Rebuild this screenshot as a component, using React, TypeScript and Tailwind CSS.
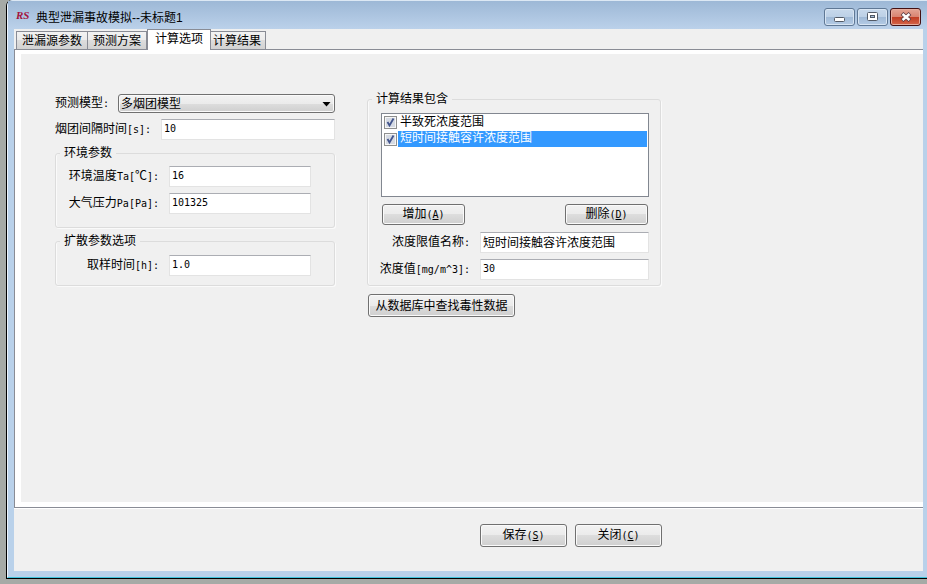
import { useState, type ReactNode } from 'react'

const tabs = ['泄漏源参数', '预测方案', '计算选项', '计算结果']

const inputClass =
  'h-[21px] min-w-0 border border-[#e3e3e3] border-t-[#abadb3] bg-white px-0.5 pb-0.5 leading-4 outline-none'

const monoClass = "font-['DejaVu_Sans_Mono',monospace] text-[10px]"

const buttonClass =
  'rounded-[3px] border border-[#707070] bg-[linear-gradient(#f2f2f2,#ebebeb_50%,#dddddd_50%,#cfcfcf)] text-center leading-4 shadow-[inset_0_0_0_1px_#fafafa]'

const captionButtonClass =
  'flex h-[18px] w-[31px] items-center justify-center rounded-[3px] border'

/* Half-width text, 6px per character */
function Half({ children }: { children: ReactNode }) {
  return <span className={`whitespace-pre ${monoClass}`}>{children}</span>
}

function PushButton({ label, accessKey, className }: { label: string; accessKey: string; className: string }) {
  return (
    <button type="button" accessKey={accessKey} className={`${buttonClass} ${className}`}>
      {label}
      <Half>
        (<u>{accessKey}</u>)
      </Half>
    </button>
  )
}

function GroupBox({ title, className, children }: { title: string; className: string; children: ReactNode }) {
  return (
    <fieldset className="w-full min-w-0 rounded-[3px] border border-[#dcdcdc] shadow-[1px_1px_0_#fafafa,inset_1px_0_0_#fafafa]">
      <legend className="ml-1 px-1 leading-[14px]">{title}</legend>
      <div className={className}>{children}</div>
    </fieldset>
  )
}

function TitleBar() {
  return (
    <header className="flex h-7 shrink-0 items-start bg-linear-to-b from-[#9db8d6] to-[#bbd1ea] pl-2 pr-1.5">
      <span className="mt-2 w-5 font-['Liberation_Serif',serif] text-[11px] font-bold italic leading-3 text-[#a3123c]">
        RS
      </span>
      <h1 className="mt-2 flex-1 truncate leading-[18px]">典型泄漏事故模拟--未标题1</h1>
      <div className="mt-[7px] flex gap-0.5">
        <button
          type="button"
          aria-label="最小化"
          className={`${captionButtonClass} border-[#5f7895] bg-[linear-gradient(#c8d9ec,#bcd0e6_50%,#9fb9d6_50%,#b4cbe5)] shadow-[inset_0_0_0_1px_#d8e5f3]`}
        >
          <svg width="13" height="7" viewBox="0 0 13 7" className="mt-1">
            <rect x="1.5" y="1.5" width="10" height="4" rx="1" fill="#fff" stroke="#525a66" />
          </svg>
        </button>
        <button
          type="button"
          aria-label="最大化"
          className={`${captionButtonClass} border-[#5f7895] bg-[linear-gradient(#c8d9ec,#bcd0e6_50%,#9fb9d6_50%,#b4cbe5)] shadow-[inset_0_0_0_1px_#d8e5f3]`}
        >
          <svg width="11" height="10" viewBox="0 0 11 10">
            <rect x="0.5" y="0.5" width="10" height="8" rx="1" fill="#fff" stroke="#525a66" />
            <rect x="3.5" y="3.5" width="4" height="2" fill="#a9c0dc" stroke="#525a66" />
          </svg>
        </button>
        <button
          type="button"
          aria-label="关闭窗口"
          className={`${captionButtonClass} border-[#431012] bg-[linear-gradient(#e3a595,#d98370_50%,#c03c22_50%,#d5664a)] shadow-[inset_0_0_0_1px_#e6ac9c]`}
        >
          <svg width="12" height="10" viewBox="0 0 12 10">
            <path d="M2 1.5 L10 8.5 M10 1.5 L2 8.5" stroke="#5a3a40" strokeWidth="4" />
            <path d="M2.5 2 L9.5 8 M9.5 2 L2.5 8" stroke="#fff" strokeWidth="2.4" />
          </svg>
        </button>
      </div>
    </header>
  )
}

function ModelSettings() {
  return (
    <div className="flex w-[280px] shrink-0 flex-col gap-1.5 pt-0.5">
      <div className="flex items-center">
        <label htmlFor="model" className="w-[63px] whitespace-nowrap leading-4">
          预测模型<Half>:</Half>
        </label>
        <div className="relative flex-1">
          <select
            id="model"
            className={`${buttonClass} block h-[19px] w-full appearance-none pl-0.5 text-left text-[12px]`}
          >
            <option>多烟团模型</option>
          </select>
          <svg width="9" height="5" viewBox="0 0 9 5" className="pointer-events-none absolute right-1 top-2">
            <path d="M0.5 0 H8.5 L4.5 4.5 Z" fill="#000" />
          </svg>
        </div>
      </div>
      <div className="flex items-center">
        <label htmlFor="interval" className="w-[106px] whitespace-nowrap leading-4">
          烟团间隔时间<Half>[s]:</Half>
        </label>
        <input id="interval" defaultValue="10" className={`${inputClass} ${monoClass} flex-1`} />
      </div>

      <GroupBox title="环境参数" className="flex flex-col gap-1.5 pb-[13px] pr-[23px] pt-1.5">
        <div className="flex items-center justify-end gap-2.5">
          <label htmlFor="temperature" className="whitespace-nowrap leading-4">
            环境温度<Half>Ta[</Half>℃<Half>]:</Half>
          </label>
          <input id="temperature" defaultValue="16" className={`${inputClass} ${monoClass} w-[142px]`} />
        </div>
        <div className="flex items-center justify-end gap-2.5">
          <label htmlFor="pressure" className="whitespace-nowrap leading-4">
            大气压力<Half>Pa[Pa]:</Half>
          </label>
          <input id="pressure" defaultValue="101325" className={`${inputClass} ${monoClass} w-[142px]`} />
        </div>
      </GroupBox>

      <GroupBox title="扩散参数选项" className="pb-[9px] pr-[23px] pt-[7px]">
        <div className="flex items-center justify-end gap-2.5">
          <label htmlFor="sampling" className="whitespace-nowrap leading-4">
            取样时间<Half>[h]:</Half>
          </label>
          <input id="sampling" defaultValue="1.0" className={`${inputClass} ${monoClass} w-[142px]`} />
        </div>
      </GroupBox>
    </div>
  )
}

function ResultSettings() {
  const [items, setItems] = useState([
    { name: '半致死浓度范围', checked: true },
    { name: '短时间接触容许浓度范围', checked: true },
  ])
  const [selected, setSelected] = useState(1)

  const toggle = (index: number) => {
    setItems(items.map((item, i) => (i === index ? { ...item, checked: !item.checked } : item)))
  }

  return (
    <div className="flex w-[294px] shrink-0 flex-col items-start gap-2">
      <GroupBox title="计算结果包含" className="pb-[5px] pl-[13px] pr-[11px] pt-[7px]">
        <ul className="h-[84px] border border-[#828790] bg-white px-px">
          {items.map((item, i) => (
            <li key={item.name} className="flex h-4 items-center first:h-[17px]" onClick={() => setSelected(i)}>
              <span className="relative mx-px size-[13px] shrink-0">
                <input
                  id={`range-${i}`}
                  type="checkbox"
                  checked={item.checked}
                  onChange={() => toggle(i)}
                  className="block size-[13px] appearance-none border border-[#8e8f8f] bg-[#d5dae3] shadow-[inset_0_0_0_1px_#f6f6f6]"
                />
                {item.checked && (
                  <svg width="13" height="13" viewBox="0 0 13 13" className="pointer-events-none absolute inset-0">
                    <path d="M3.5 6 L5.5 9.5 L9.5 2.5" fill="none" stroke="#42548c" strokeWidth="1.8" />
                  </svg>
                )}
              </span>
              <label
                htmlFor={`range-${i}`}
                className={
                  i === selected
                    ? 'h-4 flex-1 bg-[#3399ff] pl-0.5 leading-[14px] text-white'
                    : 'h-4 flex-1 pl-0.5 leading-[14px]'
                }
              >
                {item.name}
              </label>
            </li>
          ))}
        </ul>
        <div className="mt-[7px] flex justify-between px-px">
          <PushButton label="增加" accessKey="A" className="h-[21px] w-[83px]" />
          <PushButton label="删除" accessKey="D" className="h-[21px] w-[83px]" />
        </div>
        <div className="mt-[7px] flex flex-col gap-1.5">
          <div className="flex items-center justify-end gap-2.5">
            <label htmlFor="limit-name" className="whitespace-nowrap leading-4">
              浓度限值名称<Half>:</Half>
            </label>
            <input
              id="limit-name"
              defaultValue="短时间接触容许浓度范围"
              className={`${inputClass} w-[169px] shrink-0 text-[12px]`}
            />
          </div>
          <div className="flex items-center justify-end gap-2.5">
            <label htmlFor="limit-value" className="whitespace-nowrap leading-4">
              浓度值<Half>[mg/m^3]:</Half>
            </label>
            <input id="limit-value" defaultValue="30" className={`${inputClass} ${monoClass} w-[169px] shrink-0`} />
          </div>
        </div>
      </GroupBox>
      <button type="button" className={`${buttonClass} ml-px h-[23px] w-[147px]`}>
        从数据库中查找毒性数据
      </button>
    </div>
  )
}

export default function App() {
  const [activeTab, setActiveTab] = useState(2)

  return (
    <div className="flex min-h-screen flex-col bg-[#a6aaa6] pb-[5px] pl-1.5 font-['Liberation_Sans','Noto_Sans_CJK_SC',sans-serif] text-[12px] text-black">
      <div className="flex flex-1 flex-col rounded-tl-md border-b border-l border-black bg-[#b9d1ea]">
        <div className="flex flex-1 flex-col rounded-tl-md border-b border-l border-t border-b-[#3fc4dc] border-l-[#eef4fb] border-t-[#dce8f4] pb-1.5">
          <TitleBar />
          <div className="ml-1.5 mr-1 flex flex-1 flex-col bg-[#f0f0f0]">
            {/* Tabs */}
            <div role="tablist" className="flex h-5 items-end pl-0.5">
              {tabs.map((tab, i) => (
                <button
                  key={tab}
                  type="button"
                  role="tab"
                  aria-selected={i === activeTab}
                  onClick={() => setActiveTab(i)}
                  className={
                    i === activeTab
                      ? 'relative -mb-px -mr-0.5 h-[21px] border border-b-0 border-[#898c95] bg-white px-[7px] pb-0.5 leading-4'
                      : 'h-[18px] border border-b-0 border-[#898c95] bg-[linear-gradient(#f2f2f2,#ebebeb_50%,#dddddd_50%,#d2d2d2)] px-[5px] pt-px leading-4 not-first:border-l-0 last:px-1'
                  }
                >
                  {tab}
                </button>
              ))}
            </div>

            <main className="flex flex-1 flex-col border-y border-l border-[#898c95] bg-white pb-[5px] pl-1.5 pt-1">
              <div className="flex flex-1 items-start gap-8 bg-[#f0f0f0] pl-[34px] pt-[38px]">
                <ModelSettings />
                <ResultSettings />
              </div>
            </main>

            <footer className="flex h-[63px] shrink-0 items-start justify-end gap-2 border-t border-white pr-[261px] pt-[15px]">
              <PushButton label="保存" accessKey="S" className="h-[23px] w-[87px]" />
              <PushButton label="关闭" accessKey="C" className="h-[23px] w-[87px]" />
            </footer>
          </div>
        </div>
      </div>
    </div>
  )
}
